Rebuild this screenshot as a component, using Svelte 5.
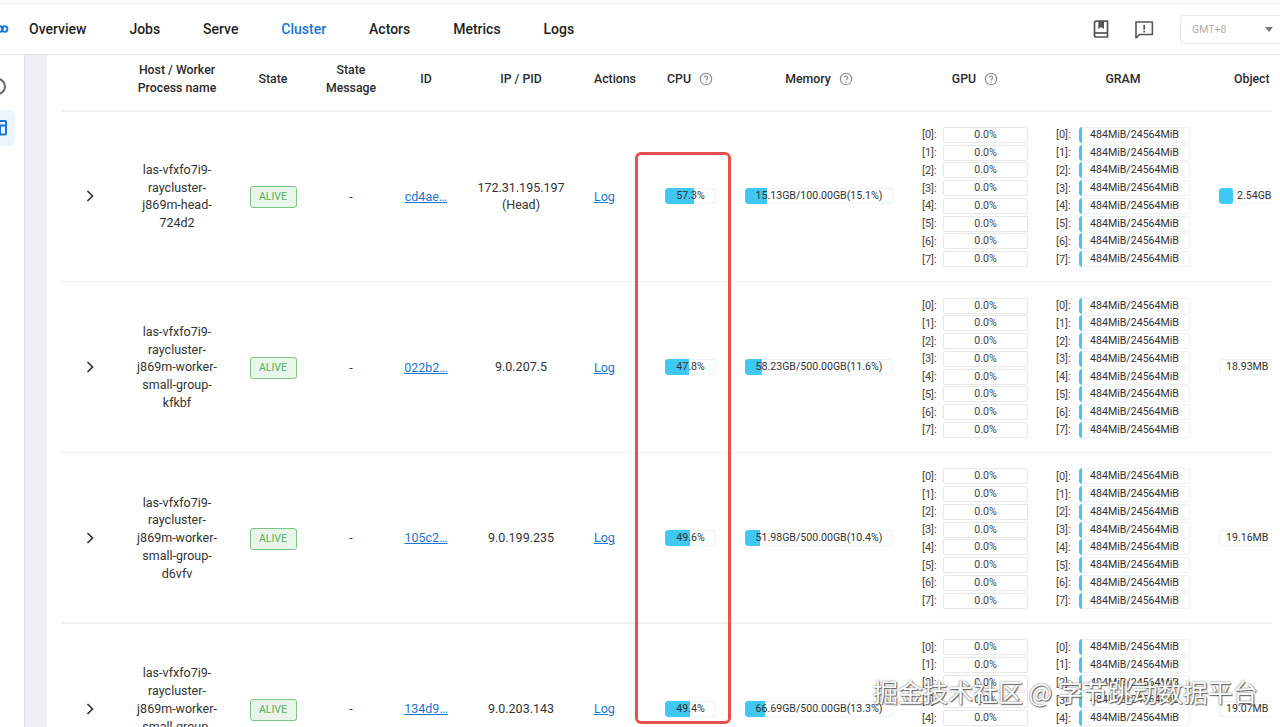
<script>
  const tabs = ['Overview', 'Jobs', 'Serve', 'Cluster', 'Actors', 'Metrics', 'Logs'];
  const columns = [
    { label: '', cls: '' },
    { label: 'Host / Worker\nProcess name', cls: 'center' },
    { label: 'State', cls: 'center' },
    { label: 'State\nMessage', cls: 'center' },
    { label: 'ID', cls: 'center' },
    { label: 'IP / PID', cls: 'center' },
    { label: 'Actions', cls: 'left' },
    { label: 'CPU', cls: 'cpu', help: true },
    { label: 'Memory', cls: 'center', help: true },
    { label: 'GPU', cls: 'center', help: true },
    { label: 'GRAM', cls: 'center' },
    { label: 'Object', cls: 'object' }
  ];
  const rows = [
    { host: ['las-vfxfo7i9-', 'raycluster-', 'j869m-head-', '724d2'], id: 'cd4ae…', ip: ['172.31.195.197', '(Head)'], cpu: 57.3, mem: '15.13GB/100.00GB(15.1%)', memPct: 15.1, obj: '2.54GB', objFill: 14, objPad: true },
    { host: ['las-vfxfo7i9-', 'raycluster-', 'j869m-worker-', 'small-group-', 'kfkbf'], id: '022b2…', ip: ['9.0.207.5'], cpu: 47.8, mem: '58.23GB/500.00GB(11.6%)', memPct: 11.6, obj: '18.93MB', objFill: 0 },
    { host: ['las-vfxfo7i9-', 'raycluster-', 'j869m-worker-', 'small-group-', 'd6vfv'], id: '105c2…', ip: ['9.0.199.235'], cpu: 49.6, mem: '51.98GB/500.00GB(10.4%)', memPct: 10.4, obj: '19.16MB', objFill: 0 },
    { host: ['las-vfxfo7i9-', 'raycluster-', 'j869m-worker-', 'small-group-', 'x2m4p'], id: '134d9…', ip: ['9.0.203.143'], cpu: 49.4, mem: '66.69GB/500.00GB(13.3%)', memPct: 13.3, obj: '19.07MB', objFill: 0 }
  ];
  const units = [0, 1, 2, 3, 4, 5, 6, 7];
</script>

<div class="page">
  <header class="topbar">
    <svg class="logo" width="10" height="14" viewBox="0 0 10 14" fill="none" stroke="#1976d2" stroke-width="1.9">
      <circle cx="1" cy="7" r="2.8" /><circle cx="5.600" cy="7" r="2.800" />
    </svg>
    <nav class="tabs">
      {#each tabs as tab}
        <span class="tab" class:active={tab === 'Cluster'}>{tab}</span>
      {/each}
    </nav>
    <div class="tools">
      <svg width="22" height="22" viewBox="0 0 22 22" fill="none">
        <path d="M4.5 5a1.8 1.8 0 0 1 1.800-1.800h11.200v15.800H6.300a1.800 1.800 0 0 1-1.800-1.800z" stroke="#555" stroke-width="1.700" />
        <path d="M4.700 15h12.800" stroke="#555" stroke-width="1.700" />
        <path d="M8.300 3.500h5.700v7.500l-2.850-2-2.850 2z" fill="#555" />
      </svg>
      <svg width="22" height="22" viewBox="0 0 22 22" fill="none">
        <path d="M3 4h16.400v12.500H6.500L3 20z" stroke="#555" stroke-width="1.6" stroke-linejoin="round" />
        <path d="M11.200 6.800v4.700M11.200 12.700v1.700" stroke="#555" stroke-width="1.7" />
      </svg>
      <div class="tz"><span>GMT+8</span><i class="caret"></i></div>
    </div>
  </header>

  <div class="body">
    <aside class="side">
      <div class="side-icon"><span class="ring"></span></div>
      <div class="side-icon current">
        <svg width="14" height="18" viewBox="0 0 14 18" fill="none" stroke="#1976d2" stroke-width="2">
          <rect x="-6" y="2" width="12" height="13.500" rx="1" /><path d="M-6 6.500h12M0 6.500v9" />
        </svg>
      </div>
    </aside>
    <div class="gutter"></div>
    <main class="main">
      <div class="grid head">
        {#each columns as col}
          <div class="hcell {col.cls}">
            <span class="hlabel">{col.label}</span>
            {#if col.help}
              <svg class="help" width="14" height="14" viewBox="0 0 14 14" fill="none">
                <circle cx="7" cy="7" r="5.700" stroke="#8a8a8a" stroke-width="1.100" />
                <path d="M5.300 5.600a1.700 1.700 0 1 1 2.700 1.400c-.7.500-1 .8-1 1.500" stroke="#8a8a8a" stroke-width="1.100" />
                <circle cx="7" cy="10.200" r=".7" fill="#8a8a8a" />
              </svg>
            {/if}
          </div>
        {/each}
      </div>

      {#each rows as row}
        <div class="grid row">
          <div class="cell center">
            <svg class="chev" width="10" height="14" viewBox="0 0 10 14" fill="none"><path d="M2.500 2l5 5-5 5" stroke="#333" stroke-width="1.700" /></svg>
          </div>
          <div class="cell center host">
            {#each row.host as line}<span>{line}</span>{/each}
          </div>
          <div class="cell center nudge"><span class="badge">ALIVE</span></div>
          <div class="cell center">-</div>
          <div class="cell center"><span class="link">{row.id}</span></div>
          <div class="cell center stack">
            {#each row.ip as line}<span>{line}</span>{/each}
          </div>
          <div class="cell left"><span class="link">Log</span></div>
          <div class="cell cpu">
            <div class="bar cpu-bar"><i style="width:{row.cpu}%"></i><b>{row.cpu}%</b></div>
          </div>
          <div class="cell center">
            <div class="bar mem-bar"><i style="width:{row.memPct}%"></i><b>{row.mem}</b></div>
          </div>
          <div class="cell center">
            <div class="units">
              {#each units as u}
                <div class="unit"><span class="idx">[{u}]:</span><div class="gpu-box">0.0%</div></div>
              {/each}
            </div>
          </div>
          <div class="cell center">
            <div class="units">
              {#each units as u}
                <div class="unit gram"><span class="idx">[{u}]:</span><div class="bar gram-box"><i></i><b>484MiB/24564MiB</b></div></div>
              {/each}
            </div>
          </div>
          <div class="cell object">
            <div class="bar obj-bar" class:filled={row.objPad}>
              {#if row.objFill}<i style="width:{row.objFill}px"></i>{/if}
              <b>{row.obj}</b>
            </div>
          </div>
        </div>
      {/each}
    </main>
  </div>

  <div class="highlight"></div>
  <div class="watermark">掘金技术社区 @ 字节跳动数据平台</div>
</div>

<style>
  :global(body) { margin: 0; background: #fff; }
  .page {
    position: relative;
    width: 1280px;
    height: 727px;
    overflow: hidden;
    background: #fff;
    color: #333;
    font-family: Roboto, "Liberation Sans", sans-serif;
    font-size: 12.500px;
    display: flex;
    flex-direction: column;
    padding-top: 3px;
    box-sizing: border-box;
  }
  .topbar {
    flex: none;
    height: 50px;
    display: flex;
    align-items: center;
    border-top: 1px solid #eeeff1;
    border-bottom: 1px solid #dfe1e4;
  }
  .logo { flex: none; margin-left: -1px; width: 10px; }
  .tabs { display: flex; gap: 42.900px; margin-left: 20px; }
  .tab { font-size: 14px; font-weight: 500; color: #1f1f1f; }
  .tab.active { color: #1976d2; }
  .tools { margin-left: auto; display: flex; align-items: center; gap: 21px; }
  .tz {
    width: 110px;
    height: 29px;
    margin-left: 4px;
    margin-right: -10px;
    border: 1px solid #e8eaed;
    border-radius: 3px;
    box-sizing: border-box;
    display: flex;
    align-items: center;
    justify-content: space-between;
    padding: 0 16px 0 11px;
    color: #b0b0b0;
    font-size: 10.500px;
  }
  .caret { width: 0; height: 0; border: 4px solid transparent; border-top: 5px solid #777; border-bottom: 0; }

  .body { flex: 1; display: flex; min-height: 0; }
  .side { flex: none; border-right: 1px solid #dfe1e4; width: 24px; padding-top: 13px; }
  .side-icon { height: 36px; width: 15px; display: flex; align-items: center; overflow: hidden; }
  .side-icon.current { background: #edf4fc; border-radius: 0 6px 6px 0; margin-top: 6px; }
  .ring { width: 17px; height: 17px; margin-left: -11px; flex: none; border: 2px solid #666; border-radius: 50%; box-sizing: border-box; }
  .gutter { width: 22px; flex: none; background: #edeff2; }
  .main { width: 1225px; padding-left: 14px; box-sizing: border-box; overflow: hidden; flex: none; }

  .grid {
    display: grid;
    grid-template-columns: 56px 120px 72px 84px 66px 124px 72px 80px 168px 144px 152px 120px;
    width: 1211px;
  }
  .head { height: 55px; align-items: center; position: relative; padding-bottom: 8px; box-sizing: border-box; }
  .head::after, .row::after {
    content: "";
    position: absolute;
    left: 0;
    top: 100%;
    width: 1211px;
    height: 1.500px;
    background: #eff0f2;
  }
  .row { height: 170.800px; position: relative; align-items: center; padding-top: 2px; box-sizing: border-box; }
  .hcell { font-weight: 500; font-size: 12.300px; line-height: 18px; color: #2b2b2b; display: flex; align-items: center; justify-content: center; gap: 8px; text-align: center; }
  .hlabel { white-space: pre-line; }
  .hcell.left { justify-content: flex-start; padding-left: 11px; }
  .hcell.cpu { justify-content: flex-start; padding-left: 12px; }
  .hcell.object { justify-content: flex-start; padding-left: 35px; }
  .help { flex: none; }

  .cell { display: flex; flex-direction: column; justify-content: center; min-width: 0; }
  .cell.center { align-items: center; text-align: center; }
  .cell.left { align-items: flex-start; padding-left: 11px; }
  .cell.cpu { align-items: flex-start; padding-left: 10px; }
  .cell.object { align-items: flex-start; padding-left: 20px; }
  .nudge { padding-top: 2px; }
  .chev { margin-left: 1px; }
  .host span, .stack span { display: block; line-height: 17.800px; white-space: nowrap; }
  .badge {
    display: block;
    width: 47px;
    height: 22px;
    line-height: 20px;
    box-sizing: border-box;
    border: 1px solid #7cc488;
    border-radius: 3px;
    background: #e9f5ea;
    color: #57ae5e;
    font-size: 10.500px;
    text-align: center;
  }
  .link { color: #1976d2; text-decoration: underline; }

  .bar {
    position: relative;
    height: 16px;
    box-sizing: border-box;
    border-radius: 3px;
    overflow: hidden;
    box-shadow: inset 0 0 0 1px #eef3f8;
    background: #fff;
  }
  .bar i { position: absolute; left: 0; top: 0; bottom: 0; background: #3ec8f2; border-radius: 3px 0 0 3px; }
  .bar b { position: relative; display: block; font-weight: 400; font-size: 10.600px; line-height: 16px; text-align: center; white-space: nowrap; color: #333; }
  .cpu-bar { width: 51px; }
  .mem-bar { width: 148px; }
  .units { display: flex; flex-direction: column; gap: 1.750px; margin-top: 1px; }
  .unit { display: flex; align-items: center; height: 16px; gap: 6px; }
  .idx { width: 15px; font-size: 11px; color: #444; text-align: left; white-space: nowrap; }
  .gpu-box {
    width: 85px;
    height: 16px;
    box-sizing: border-box;
    box-shadow: inset 0 0 0 1px #e8e8e8;
    border-radius: 2px;
    text-align: center;
    line-height: 16px;
    font-size: 10.600px;
    color: #444;
  }
  .gram { gap: 8px; }
  .gram-box { width: 111px; }
  .gram-box i { width: 3px; }
  .obj-bar { width: 100px; }
  .obj-bar b { text-align: left; padding-left: 7px; }
  .obj-bar.filled b { padding-left: 18px; }
  .obj-bar i { border-radius: 3px; }

  .highlight {
    position: absolute;
    left: 635px;
    top: 152px;
    width: 96px;
    height: 572px;
    box-sizing: border-box;
    border: 3px solid #e9504e;
    border-radius: 6px;
    pointer-events: none;
  }
  .watermark {
    position: absolute;
    left: 873px;
    top: 675px;
    font-family: "Noto Sans CJK SC", sans-serif;
    font-size: 25px;
    line-height: 32px;
    white-space: nowrap;
    color: #fff;
    text-shadow: 0 0 2px #555, 1px 1px 1px #666;
    pointer-events: none;
  }
</style>
